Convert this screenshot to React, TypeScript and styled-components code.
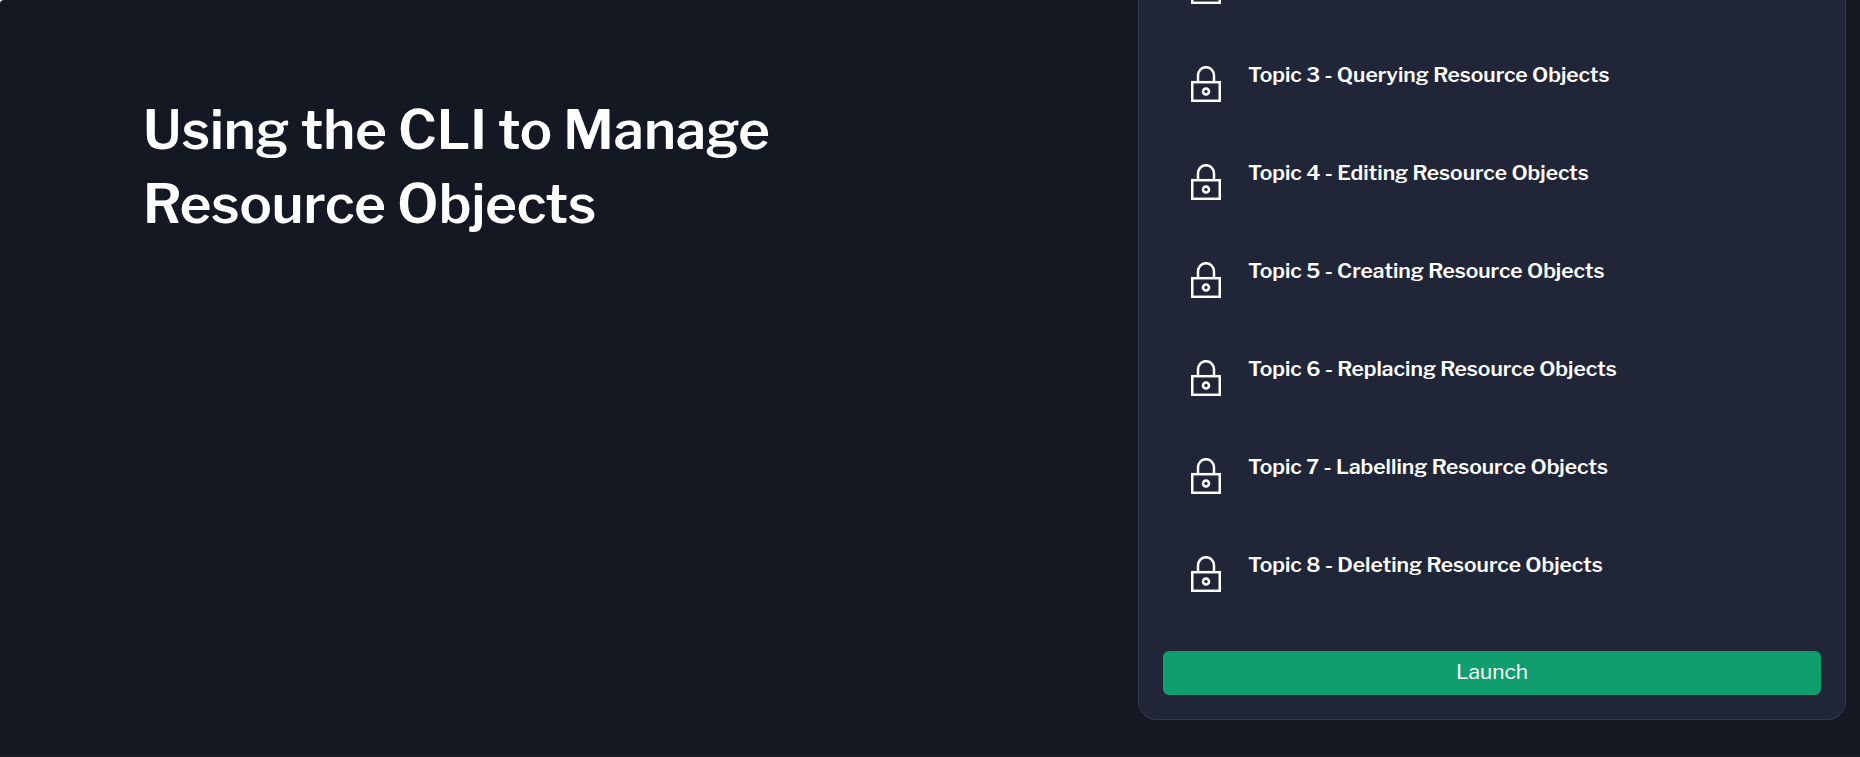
import React from "react";
import styled, { createGlobalStyle } from "styled-components";

const GlobalStyle = createGlobalStyle`
  * { box-sizing: border-box; }
  body { margin: 0; background: #ffffff; }
`;

const Page = styled.main`
  display: grid;
  grid-template-columns: minmax(0, 995fr) minmax(0, 708fr);
  grid-template-rows: minmax(0, 1fr);
  height: 100vh;
  overflow: hidden;
  padding: 0 14px 35px 143px;
  background: #141823;
  border-bottom: 2px solid #1c1c1c;
  border-top-left-radius: 4px;
  color: #ffffff;
  font-family: "Libre Franklin", "Liberation Sans", sans-serif;
`;

const Heading = styled.h1`
  max-width: 660px;
  margin: 93px 0 0;
  font-size: 54px;
  font-weight: 600;
  line-height: 74px;
`;

const Panel = styled.section`
  align-self: end;
  padding: 24px;
  border: 1px solid #343b4b;
  border-radius: 18px;
  background: #202637;
`;

const TopicList = styled.ul`
  display: flex;
  flex-direction: column;
  gap: 62px;
  margin: 0 0 59px;
  padding: 0 28px;
  list-style: none;
`;

const Topic = styled.li`
  display: flex;
  gap: 27px;
  height: 36px;
`;

const TopicTitle = styled.h2`
  margin: 0;
  font-size: 21px;
  font-weight: 600;
  line-height: 18px;
`;

const LockSvg = styled.svg`
  flex: none;
  width: 30px;
  height: 36px;
`;

const LaunchButton = styled.button`
  display: block;
  width: 100%;
  height: 44px;
  padding: 0 0 2px;
  border: 0;
  border-radius: 6px;
  background: #109e6e;
  color: #ffffff;
  font: 400 21px/42px "Libre Franklin", "Liberation Sans", sans-serif;
  cursor: pointer;
`;

const Lock = () => (
  <LockSvg viewBox="0 0 30 36" fill="none" stroke="#ffffff" strokeWidth="2.5" aria-hidden="true">
    <rect x="1.25" y="16.2" width="27.5" height="18.6" />
    <path d="M7 16V9.5a8 8.3 0 0 1 16 0V16" />
    <circle cx="15" cy="25.5" r="3" strokeWidth="2.6" />
  </LockSvg>
);

const topics = [
  "",
  "Topic 3 - Querying Resource Objects",
  "Topic 4 - Editing Resource Objects",
  "Topic 5 - Creating Resource Objects",
  "Topic 6 - Replacing Resource Objects",
  "Topic 7 - Labelling Resource Objects",
  "Topic 8 - Deleting Resource Objects",
];

export default function App() {
  return (
    <>
      <GlobalStyle />
      <Page>
        <Heading>Using the CLI to Manage Resource Objects</Heading>
        <Panel>
          <TopicList>
            {topics.map((title) => (
              <Topic key={title}>
                <Lock />
                {title && <TopicTitle>{title}</TopicTitle>}
              </Topic>
            ))}
          </TopicList>
          <LaunchButton type="button">Launch</LaunchButton>
        </Panel>
      </Page>
    </>
  );
}
